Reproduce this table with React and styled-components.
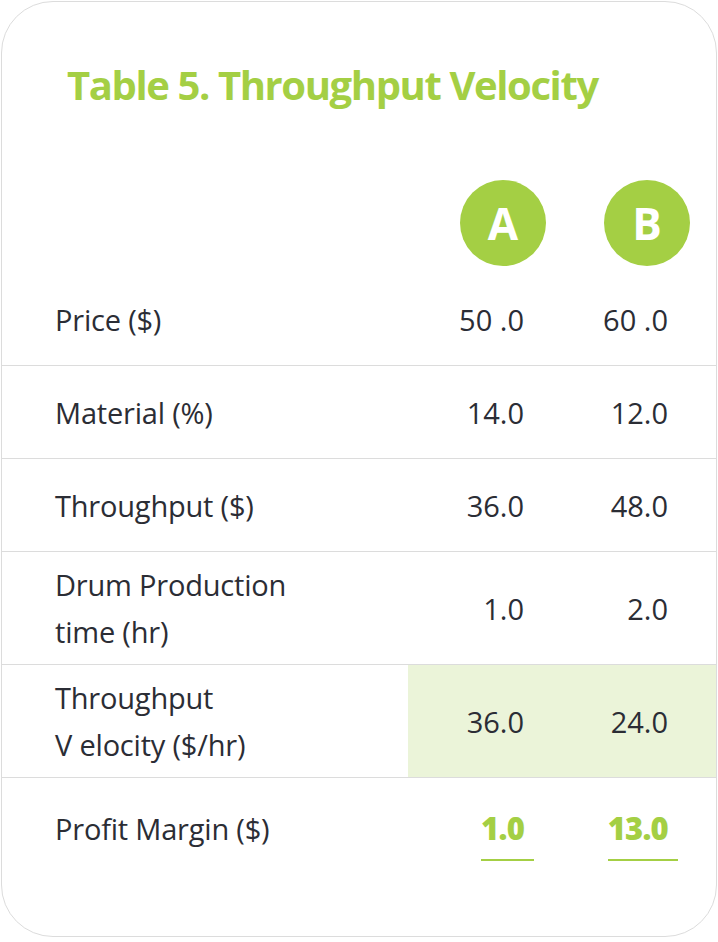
import React from 'react';
import styled, { createGlobalStyle } from 'styled-components';

const GlobalStyle = createGlobalStyle`
    body {
        margin: 0;
        background: #fff;
        font-family: "Open Sans", Lato, sans-serif;
    }
`

const Card = styled.div`
    box-sizing: border-box;
    width: 716px;
    height: 936px;
    margin: 1px 0 0 1px;
    border: 1px solid #dcdcdc;
    border-radius: 52px;
    overflow: hidden;
    color: #2b2d35;
`

const Titulo = styled.h1`
    margin: 0;
    padding: 59px 0 0 65px;
    font-size: 40px;
    line-height: 48px;
    font-weight: 700;
    color: #a4cf44;
    letter-spacing: -1.4px;
`

const Cabecalho = styled.div`
    display: flex;
    margin: 71px 0 7px;
`

const Linha = styled.div`
    display: flex;
    min-height: ${props => props.altura || 92}px;
    border-bottom: ${props => props.semBorda ? 'none' : '1px solid #dcdcdc'};
`

const Rotulo = styled.div`
    box-sizing: border-box;
    width: 406px;
    padding-left: 53px;
    display: flex;
    align-items: center;
    font-size: 29px;
    line-height: 47px;
    letter-spacing: -0.2px;
`

const Valores = styled.div`
    flex: 1;
    display: grid;
    grid-template-columns: 144px 144px;
    background: ${props => props.destaque ? '#ebf4d9' : 'transparent'};
`

const Valor = styled.div`
    box-sizing: border-box;
    display: flex;
    align-items: center;
    justify-content: flex-end;
    padding-right: 28px;
    font-size: ${props => props.lucro ? 31 : 29}px;
    font-weight: ${props => props.lucro ? 800 : 400};
    color: ${props => props.lucro ? '#a4cf44' : '#2b2d35'};
    letter-spacing: ${props => props.lucro ? '-0.8px' : '0'};
`

const Sublinhado = styled.span`
    display: inline-block;
    padding: 0 10px 14px 0;
    margin-right: -10px;
    margin-top: 16px;
    border-bottom: 2px solid #a4cf44;
    line-height: 34px;
`

const CelulaCirculo = styled.div`
    display: flex;
    justify-content: flex-end;
    padding-right: 6px;
`

const Circulo = styled.div`
    width: 86px;
    height: 86px;
    border-radius: 50%;
    background: #a4cf44;
    color: #fff;
    font-size: 44px;
    font-weight: 700;
    display: flex;
    align-items: center;
    justify-content: center;
`

const dados = [
    { rotulo: 'Price ($)', a: '50 .0', b: '60 .0' },
    { rotulo: 'Material (%)', a: '14.0', b: '12.0' },
    { rotulo: 'Throughput ($)', a: '36.0', b: '48.0' },
    { rotulo: ['Drum Production', 'time (hr)'], a: '1.0', b: '2.0', altura: 112 },
    { rotulo: ['Throughput', 'V elocity ($/hr)'], a: '36.0', b: '24.0', altura: 112, destaque: true },
]

function App() {
    return (
        <>
            <GlobalStyle />
            <Card>
                <Titulo>Table 5. Throughput Velocity</Titulo>
                <Cabecalho>
                    <Rotulo />
                    <Valores>
                        <CelulaCirculo><Circulo>A</Circulo></CelulaCirculo>
                        <CelulaCirculo><Circulo>B</Circulo></CelulaCirculo>
                    </Valores>
                </Cabecalho>
                {dados.map((item, index) => (
                    <Linha key={index} altura={item.altura}>
                        <Rotulo>
                            {Array.isArray(item.rotulo) ? (
                                <div>{item.rotulo[0]}<br />{item.rotulo[1]}</div>
                            ) : item.rotulo}
                        </Rotulo>
                        <Valores destaque={item.destaque}>
                            <Valor>{item.a}</Valor>
                            <Valor>{item.b}</Valor>
                        </Valores>
                    </Linha>
                ))}
                <Linha semBorda altura={100}>
                    <Rotulo>Profit Margin ($)</Rotulo>
                    <Valores>
                        <Valor lucro><Sublinhado>1.0</Sublinhado></Valor>
                        <Valor lucro><Sublinhado>13.0</Sublinhado></Valor>
                    </Valores>
                </Linha>
            </Card>
        </>
    )
}

export default App
